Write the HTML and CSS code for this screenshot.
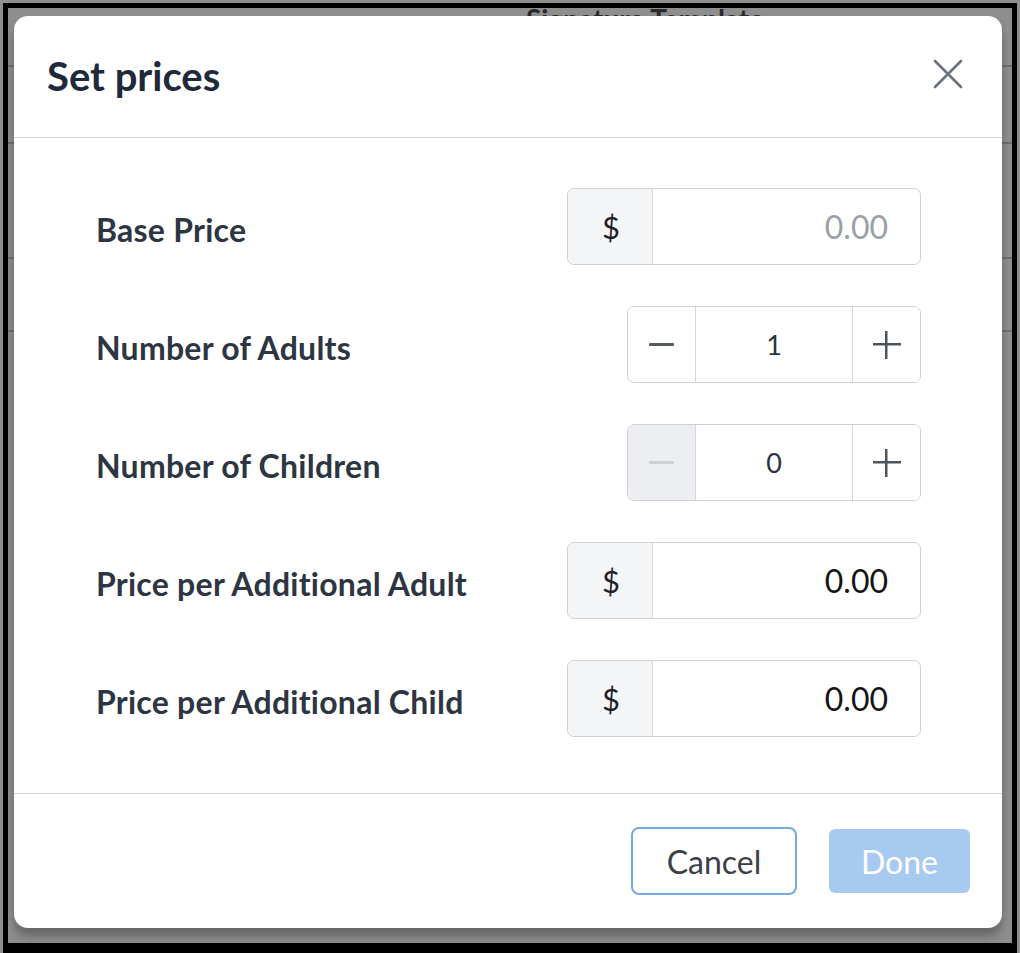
FILE: index.html
```html
<!DOCTYPE html>
<html lang="en">
<head>
<meta charset="utf-8">
<title>Set prices</title>
<link rel="stylesheet" href="styles.css">
</head>
<body>
<div class="frame">
  <div class="backdrop-title">Signature Template</div>
  <div class="modal">
    <div class="modal-header">
      <h1 class="modal-title">Set prices</h1>
      <button class="close-btn" aria-label="Close">
        <svg width="30" height="30" viewBox="0 0 30 30"><path d="M2 2 L28 28 M28 2 L2 28" stroke="#6b7180" stroke-width="2.6" stroke-linecap="round" fill="none"/></svg>
      </button>
    </div>
    <div class="modal-body">
      <div class="row">
        <div class="label">Base Price</div>
        <div class="money">
          <div class="prefix">$</div>
          <div class="value placeholder">0.00</div>
        </div>
      </div>
      <div class="row">
        <div class="label">Number of Adults</div>
        <div class="stepper">
          <div class="step"><span class="minus"></span></div>
          <div class="count">1</div>
          <div class="step"><span class="plus"></span></div>
        </div>
      </div>
      <div class="row">
        <div class="label">Number of Children</div>
        <div class="stepper">
          <div class="step disabled"><span class="minus"></span></div>
          <div class="count">0</div>
          <div class="step"><span class="plus"></span></div>
        </div>
      </div>
      <div class="row">
        <div class="label">Price per Additional Adult</div>
        <div class="money">
          <div class="prefix">$</div>
          <div class="value">0.00</div>
        </div>
      </div>
      <div class="row">
        <div class="label">Price per Additional Child</div>
        <div class="money">
          <div class="prefix">$</div>
          <div class="value">0.00</div>
        </div>
      </div>
    </div>
    <div class="modal-footer">
      <button class="btn btn-cancel">Cancel</button>
      <button class="btn btn-done">Done</button>
    </div>
  </div>
</div>
</body>
</html>
```

FILE: styles.css
```css
* { box-sizing: border-box; }
html, body { margin: 0; padding: 0; }
body {
  width: 1020px;
  height: 953px;
  background: #8f8f8f;
  padding: 3px 3px 0 3px;
  overflow: hidden;
  font-family: "Lato", "Noto Sans", sans-serif;
}
.frame {
  position: relative;
  height: 950px;
  border-style: solid;
  border-color: #000;
  border-width: 5px 5px 10px 5px;
  background-color: #8e8e8e;
  background-image:
    linear-gradient(#6e6e6e, #6e6e6e),
    linear-gradient(#6e6e6e, #6e6e6e),
    linear-gradient(#6e6e6e, #6e6e6e),
    linear-gradient(#6e6e6e, #6e6e6e);
  background-repeat: no-repeat;
  background-size: 100% 2px;
  background-position: 0 57px, 0 134px, 0 249px, 0 322px;
  display: flex;
}
.backdrop-title {
  position: absolute;
  top: -6px;
  left: 518px;
  font-size: 28px;
  font-weight: 700;
  color: #2a2a2a;
  white-space: nowrap;
}
.modal {
  position: relative;
  z-index: 1;
  margin: 8px 10px 15px 6px;
  flex: 1;
  background: #fff;
  border-radius: 14px;
  box-shadow: 0 8px 10px rgba(0,0,0,0.28);
  display: flex;
  flex-direction: column;
}
.modal-header {
  height: 122px;
  border-bottom: 1px solid #d3d6da;
  display: flex;
  align-items: center;
  justify-content: space-between;
  padding: 0 39px 0 33px;
}
.modal-title {
  margin: 0;
  font-size: 40px;
  font-weight: 700;
  color: #1e2a3b;
  position: relative;
  top: -1px;
}
.close-btn {
  background: none;
  border: 0;
  padding: 0;
  width: 30px;
  height: 30px;
  display: flex;
  position: relative;
  top: -3px;
}
.modal-body {
  padding: 50px 81px 56px 82px;
  display: flex;
  flex-direction: column;
  gap: 41px;
  border-bottom: 1px solid #d3d6da;
}
.row {
  display: flex;
  align-items: center;
  justify-content: space-between;
  height: 77px;
}
.label {
  font-size: 32px;
  font-weight: 700;
  letter-spacing: 0.25px;
  color: #2e3542;
  position: relative;
  top: 3px;
}
.money {
  width: 354px;
  height: 77px;
  border: 1.5px solid #cdd1d6;
  border-radius: 7px;
  display: flex;
  overflow: hidden;
}
.prefix {
  width: 85px;
  background: #f4f5f7;
  border-right: 1.5px solid #d6d9dd;
  display: flex;
  align-items: center;
  justify-content: center;
  font-size: 31px;
  color: #1f2328;
  padding-left: 2px;
}
.value {
  flex: 1;
  display: flex;
  align-items: center;
  justify-content: flex-end;
  padding-right: 32px;
  font-size: 32px;
  color: #141414;
}
.value.placeholder { color: #9aa0a7; }
.stepper {
  width: 294px;
  height: 77px;
  border: 1.5px solid #cdd1d6;
  border-radius: 7px;
  display: flex;
  overflow: hidden;
}
.step {
  width: 67px;
  display: flex;
  align-items: center;
  justify-content: center;
  background: #fff;
}
.step.disabled { background: #eceef1; }
.count {
  flex: 1;
  border-left: 1.5px solid #d3d6da;
  border-right: 1.5px solid #d3d6da;
  display: flex;
  align-items: center;
  justify-content: center;
  font-size: 27px;
  color: #2a3342;
}
.minus {
  display: block;
  width: 25px;
  height: 2.5px;
  background: #555a62;
  border-radius: 1px;
}
.step.disabled .minus { background: #cdd1d6; }
.plus {
  display: block;
  width: 28px;
  height: 28px;
  background:
    linear-gradient(#4e545c, #4e545c) center / 28px 2.5px no-repeat,
    linear-gradient(#4e545c, #4e545c) center / 2.5px 28px no-repeat;
}
.modal-footer {
  flex: 1;
  display: flex;
  align-items: center;
  justify-content: flex-end;
  gap: 32px;
  padding: 0 32px 0 0;
}
.btn {
  font-family: "Lato", "Noto Sans", sans-serif;
  font-size: 32px;
  border-radius: 8px;
  cursor: pointer;
}
.btn-cancel {
  width: 166px;
  height: 68px;
  background: #fff;
  border: 2px solid #76a9e2;
  color: #3b3f46;
}
.btn-done {
  width: 141px;
  height: 64px;
  background: #a9caf0;
  border: 0;
  color: #fff;
  border-radius: 6px;
}
```
